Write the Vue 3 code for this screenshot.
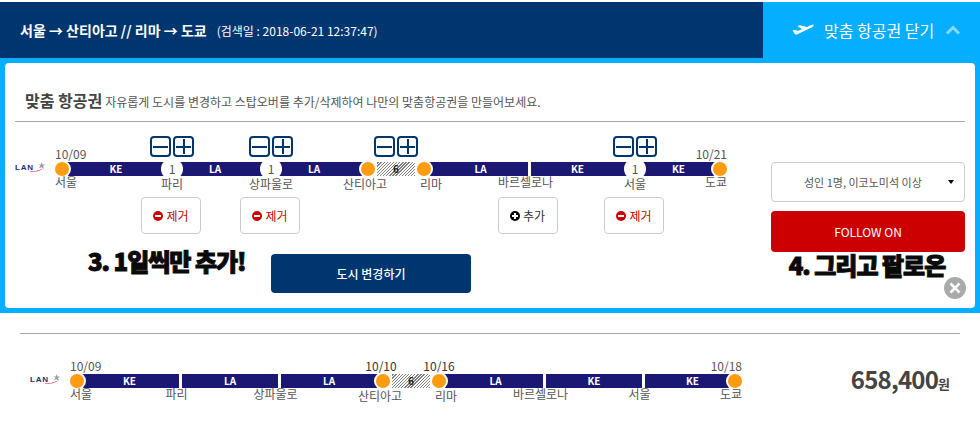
<script setup>
const stop = (o) => ({ type: 'stop', ...o })
const panelRoute = [
  stop({ w: 16, pos: 'first', date: '10/09', label: '서울', dy: -2 }),
  { type: 'seg', w: 90, text: 'KE' },
  { type: 'node', w: 22, label: '파리', ctrl: true, action: 'remove' },
  { type: 'seg', w: 77, text: 'LA', pr: 13 },
  { type: 'node', w: 22, label: '상파울로', ctrl: true, action: 'remove' },
  { type: 'seg', w: 77, text: 'LA', pr: 13 },
  stop({ w: 18, pos: 'to-stay', label: '산티아고', dx: -3 }),
  { type: 'stay', w: 38, text: '6', ctrl: true },
  stop({ w: 18, pos: 'from-stay', label: '리마', dx: 7 }),
  { type: 'seg', w: 95, text: 'LA' },
  { type: 'gap', w: 3, label: '바르셀로나', dx: -4, dy: -2, action: 'add' },
  { type: 'seg', w: 93, text: 'KE' },
  { type: 'node', w: 22, label: '서울', ctrl: true, action: 'remove' },
  { type: 'seg', w: 65, text: 'KE' },
  stop({ w: 16, pos: 'last', date: '10/21', label: '도쿄', dy: -2 }),
]
const resultRoute = [
  stop({ w: 16, pos: 'first', date: '10/09', label: '서울', dy: -2 }),
  { type: 'seg', w: 93, text: 'KE', pr: 6 },
  { type: 'gap', w: 3, label: '파리', dx: -4, dy: -2 },
  { type: 'seg', w: 96, text: 'LA' },
  { type: 'gap', w: 3, label: '상파울로', dx: -4, dy: -2 },
  { type: 'seg', w: 93, text: 'LA', pl: 3 },
  stop({ w: 18, pos: 'to-stay', date: '10/10', strong: true, dateDx: -2, label: '산티아고', dx: -3 }),
  { type: 'stay', w: 38, text: '6' },
  stop({ w: 18, pos: 'from-stay', date: '10/16', strong: true, label: '리마', dx: 7 }),
  { type: 'seg', w: 95, text: 'LA' },
  { type: 'gap', w: 3, label: '바르셀로나', dx: -4, dy: -2 },
  { type: 'seg', w: 96, text: 'KE' },
  { type: 'gap', w: 3, label: '서울', dx: -4, dy: -2 },
  { type: 'seg', w: 81, text: 'KE', pl: 14 },
  stop({ w: 16, pos: 'last', date: '10/18', label: '도쿄', dy: -2 }),
]
const routes = { panel: panelRoute, result: resultRoute }
const labelStyle = (c) => ({
  marginLeft: `${(c.dx || 0) * 2}px`,
  marginTop: `${c.dy || 0}px`,
  marginBottom: `${-(c.dy || 0)}px`,
})
const dateStyle = (c) => ({ marginLeft: `${(c.dateDx || 0) * 2}px` })
const slotStyle = (c) => ({ paddingRight: `${c.pr || 0}px`, paddingLeft: `${c.pl || 0}px` })
</script>

<template>
  <div class="page">
    <header class="topbar">
      <div class="summary">
        <strong>서울 → 산티아고 // 리마 → 도쿄</strong>
        <span>(검색일 : 2018-06-21 12:37:47)</span>
      </div>
      <div class="toggle">
        <svg class="plane" viewBox="0 0 22 14" width="22" height="14">
          <path fill="#fff" d="M0.5 7.5 L3.2 6.8 L5.5 8 L10 6.2 L5.5 3 L8 2.2 L15 4 L19 2 Q21.5 1 21.8 2 Q22 3.2 19.5 4.5 L6 11 Q4 12 2.8 11 Z" />
        </svg>
        <span>맞춤 항공권 닫기</span>
        <svg class="chev" viewBox="0 0 16 10" width="16" height="10">
          <path d="M2 8.5 L8 2.5 L14 8.5" fill="none" stroke="#8ad8ff" stroke-width="3" />
        </svg>
      </div>
    </header>

    <section class="panel">
      <div class="card">
        <div class="title">
          <b>맞춤 항공권</b>
          <span>자유롭게 도시를 변경하고 스탑오버를 추가/삭제하여 나만의 맞춤항공권을 만들어보세요.</span>
        </div>
        <div class="body">
          <div class="left">
            <div class="route-line">
              <div class="logo">
                <span class="lan">LAN</span>
                <svg viewBox="0 0 15 10" width="15" height="10" class="mark">
                  <path d="M11.5 0 L12.5 2.5 L15 2.6 L13 4 L14 7 L11.5 5.2 L9 6 L10.5 3.5 L8.5 2.5 L11 2.4 Z" fill="#9a9aa2" />
                  <path d="M0 9.6 Q8 9 14 6.5 Q8 10 0 10 Z" fill="#d8283c" />
                </svg>
              </div>
              <div class="route">
                <div v-for="(c, i) in routes.panel" :key="i" class="col" :class="c.pos" :style="{ width: c.w + 'px' }">
                  <div class="top">
                    <div v-if="c.ctrl" class="ctrl">
                      <button class="sq"><i class="h"></i></button>
                      <button class="sq"><i class="h"></i><i class="v"></i></button>
                    </div>
                    <span v-if="c.date" class="date" :class="{ strong: c.strong }" :style="dateStyle(c)">{{ c.date }}</span>
                  </div>
                  <div class="slot" :class="c.type" :style="slotStyle(c)">
                    <i v-if="c.type === 'stop'" class="dot"></i>
                    <span v-else-if="c.type === 'node'" class="count">1</span>
                    <span v-else-if="c.text">{{ c.text }}</span>
                  </div>
                  <span v-if="c.label" class="label" :style="labelStyle(c)">{{ c.label }}</span>
                  <button v-if="c.action" class="action" :class="c.action">
                    <i class="sign"></i>{{ c.action === 'add' ? '추가' : '제거' }}
                  </button>
                </div>
              </div>
            </div>
            <div class="bottom">
              <div class="note note3">3. 1일씩만 추가!</div>
              <button class="change">도시 변경하기</button>
            </div>
          </div>
          <div class="right">
            <div class="select">
              <span>성인 1명, 이코노미석 이상</span>
              <i></i>
            </div>
            <button class="follow">FOLLOW ON</button>
            <div class="note note4">4. 그리고 팔로온</div>
          </div>
        </div>
        <button class="close" aria-label="닫기">
          <svg viewBox="0 0 22 22" width="22" height="22">
            <path d="M6.5 6.5 L15.5 15.5 M15.5 6.5 L6.5 15.5" stroke="#fff" stroke-width="2.6" />
          </svg>
        </button>
      </div>
    </section>

    <section class="result">
      <div class="route-line">
        <div class="logo">
          <span class="lan">LAN</span>
          <svg viewBox="0 0 15 10" width="15" height="10" class="mark">
            <path d="M11.5 0 L12.5 2.5 L15 2.6 L13 4 L14 7 L11.5 5.2 L9 6 L10.5 3.5 L8.5 2.5 L11 2.4 Z" fill="#9a9aa2" />
            <path d="M0 9.6 Q8 9 14 6.5 Q8 10 0 10 Z" fill="#d8283c" />
          </svg>
        </div>
        <div class="route">
          <div v-for="(c, i) in routes.result" :key="i" class="col" :class="c.pos" :style="{ width: c.w + 'px' }">
            <div class="top">
              <span v-if="c.date" class="date" :class="{ strong: c.strong }" :style="dateStyle(c)">{{ c.date }}</span>
            </div>
            <div class="slot" :class="c.type" :style="slotStyle(c)">
              <i v-if="c.type === 'stop'" class="dot"></i>
              <span v-else-if="c.text">{{ c.text }}</span>
            </div>
            <span v-if="c.label" class="label" :style="labelStyle(c)">{{ c.label }}</span>
          </div>
        </div>
      </div>
      <div class="price"><b>658,400</b><em>원</em></div>
    </section>
  </div>
</template>

<style>
html, body { margin: 0; background: #fff; overflow: hidden; }
</style>

<style scoped>
.page {
  width: 980px;
  padding-top: 2px;
  font-family: "Noto Sans CJK KR", "Noto Sans", sans-serif;
  color: #555;
}
button { font-family: inherit; padding: 0; cursor: pointer; }
i { display: block; font-style: normal; }

.topbar { display: flex; height: 56px; background: #06aeff; }
.summary {
  width: 763px;
  box-sizing: border-box;
  background: #00366f;
  color: #fff;
  display: flex;
  align-items: center;
  padding-left: 20px;
  gap: 10px;
  font-size: 12px;
}
.summary strong { font-size: 14px; }
.toggle {
  flex: 1;
  display: flex;
  align-items: center;
  padding-left: 29px;
  color: #fff;
  font-size: 16px;
}
.plane { margin-right: 10px; }
.chev { margin-left: 11px; }

.panel { background: #06aeff; padding: 5px; }
.card {
  position: relative;
  height: 245px;
  box-sizing: border-box;
  background: #fff;
  border-radius: 4px;
  padding: 0 10px;
}
.title {
  height: 59px;
  box-sizing: border-box;
  padding: 27px 0 0 10px;
  border-bottom: 1px solid #aaa;
  display: flex;
  align-items: baseline;
  gap: 3px;
  font-size: 12px;
  line-height: 20px;
}
.title b { font-size: 16px; color: #444; }
.body { display: flex; justify-content: space-between; padding-top: 14px; }
.left { width: 730px; }

.route-line { display: flex; }
.logo {
  width: 40px;
  height: 14px;
  margin-top: 26px;
  display: flex;
  position: relative;
  align-items: center;
  flex: none;
}
.lan {
  font: bold 8px/8px "Liberation Sans", sans-serif;
  letter-spacing: 0.8px;
  color: #1d2f6e;
  margin-top: -3px;
}
.mark { position: absolute; left: 15px; top: 0; }
.route { display: flex; }
.col {
  display: flex;
  flex-direction: column;
  align-items: center;
  flex: none;
}
.col.first { align-items: flex-start; }
.col.last { align-items: flex-end; }
.top {
  height: 26px;
  display: flex;
  justify-content: center;
  align-items: flex-start;
  position: relative;
}
.date {
  margin-top: 10px;
  font-size: 12px;
  line-height: 16px;
  white-space: nowrap;
  color: #555;
  flex: none;
}
.date.strong { color: #333; }
.ctrl { display: flex; gap: 2px; flex: none; }
.sq {
  position: relative;
  width: 21px;
  height: 21px;
  border: 2px solid #00366f;
  border-radius: 4px;
  background: #fff;
  box-sizing: border-box;
}
.sq .h { position: absolute; left: 1px; right: 1px; top: 7.5px; height: 2px; background: #00366f; }
.sq .v { position: absolute; top: 1px; bottom: 1px; left: 7.5px; width: 2px; background: #00366f; }

.slot {
  width: 100%;
  height: 14px;
  box-sizing: border-box;
  display: flex;
  align-items: center;
  justify-content: center;
  font-size: 10px;
  font-weight: bold;
  color: #fff;
  line-height: 14px;
}
.slot.seg, .slot.node { background: #1a1872; }
.slot.gap { background: #fff; }
.slot.stay {
  background: repeating-linear-gradient(-45deg, #808080 0 1px, #fff 1px 2.2px);
  color: #222;
}
.slot.stop { justify-content: center; }
.dot {
  width: 14px;
  height: 14px;
  border-radius: 50%;
  background: #ff9c12;
  box-shadow: 0 0 0 2px #fff;
  flex: none;
  position: relative;
}
.first .slot { justify-content: flex-start; background: linear-gradient(90deg, transparent 50%, #1a1872 50%); }
.last .slot { justify-content: flex-end; background: linear-gradient(90deg, #1a1872 50%, transparent 50%); }
.to-stay .slot { background: linear-gradient(90deg, #1a1872 50%, #fff 50%); }
.from-stay .slot { background: linear-gradient(90deg, #fff 50%, #1a1872 50%); }
.count {
  position: relative;
  z-index: 0;
  width: 22px;
  height: 14px;
  flex: none;
  text-align: center;
  font-size: 12px;
  font-weight: normal;
  line-height: 14px;
  color: #555;
}
.count::before {
  content: "";
  position: absolute;
  z-index: -1;
  left: 0;
  top: -4px;
  width: 22px;
  height: 22px;
  border-radius: 50%;
  background: #fff;
}
.label {
  font-size: 12px;
  line-height: 16px;
  white-space: nowrap;
  flex: none;
  color: #555;
  position: relative;
}
.action {
  margin-top: 5px;
  margin-right: 2px;
  width: 60px;
  height: 37px;
  flex: none;
  border: 1px solid #ccc;
  border-radius: 4px;
  background: #fff;
  font-size: 12px;
  display: flex;
  align-items: center;
  justify-content: center;
  gap: 3px;
}
.action.remove { color: #c00; }
.action.add { color: #333; margin-right: 4px; }
.sign {
  width: 10px;
  height: 10px;
  border-radius: 50%;
  position: relative;
  background: #c00;
}
.add .sign { background: #000; }
.sign::before {
  content: "";
  position: absolute;
  left: 2px;
  right: 2px;
  top: 4px;
  height: 2px;
  background: #fff;
}
.add .sign::after {
  content: "";
  position: absolute;
  top: 2px;
  bottom: 2px;
  left: 4px;
  width: 2px;
  background: #fff;
}

.bottom { display: flex; align-items: flex-start; margin-top: 20px; }
.note {
  font-size: 24px;
  line-height: 28px;
  font-weight: 900;
  color: #0a0a0a;
  -webkit-text-stroke: 1px #0a0a0a;
  white-space: nowrap;
  letter-spacing: -1px;
}
.note3 { width: 183px; padding-left: 73px; margin-top: -7px; flex: none; }
.change {
  width: 200px;
  height: 39px;
  border: 0;
  border-radius: 4px;
  background: #00366f;
  color: #fff;
  font-size: 12px;
  font-weight: 500;
  margin-left: 0;
}

.right { width: 194px; padding-top: 26px; }
.select {
  height: 40px;
  box-sizing: border-box;
  border: 1px solid #ccc;
  border-radius: 4px;
  display: flex;
  align-items: center;
  padding-left: 32px;
  font-size: 11px;
  color: #555;
}
.select i {
  margin-left: 26px;
  border-left: 3px solid transparent;
  border-right: 3px solid transparent;
  border-top: 4px solid #000;
}
.follow {
  display: block;
  width: 194px;
  height: 41px;
  margin-top: 9px;
  border: 0;
  border-radius: 4px;
  background: #c00;
  color: #fff;
  font-size: 12px;
}
.note4 { text-align: center; margin-top: -1px; margin-left: -2px; }

.close {
  position: absolute;
  right: 9px;
  bottom: 9px;
  width: 22px;
  height: 22px;
  border: 0;
  border-radius: 50%;
  background: #aaa;
  display: flex;
}

.result {
  margin: 20px 20px 0;
  padding: 14px 10px 0;
  border-top: 1px solid #aaa;
  display: flex;
}
.price {
  margin-left: auto;
  margin-top: 16px;
  display: flex;
  align-items: baseline;
  height: 30px;
  line-height: 30px;
  color: #444;
}
.price b { font-size: 24px; letter-spacing: -0.8px; }
.price em { font-style: normal; font-weight: bold; font-size: 13px; margin-left: 0; }
</style>
